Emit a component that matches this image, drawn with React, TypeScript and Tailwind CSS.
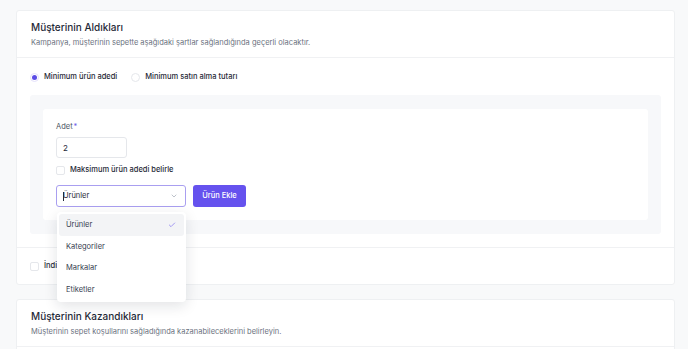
import { Check, ChevronDown } from "lucide-react";

const font = { fontFamily: "Inter, 'Noto Sans', sans-serif" };

const Radio = ({ checked, label }: { checked?: boolean; label: string }) => (
  <label className="flex items-center gap-[5px]">
    <span
      className={`flex h-[9px] w-[9px] items-center justify-center rounded-full border ${
        checked ? "border-[#e4e0fb] bg-white" : "border-[#e5e7eb] bg-white"
      }`}
    >
      {checked && <span className="h-[5px] w-[5px] rounded-full bg-[#5b4ce6]" />}
    </span>
    <span className="text-[7.5px] font-medium text-[#1f2937]">{label}</span>
  </label>
);

const Box = () => (
  <span className="h-[9px] w-[9px] rounded-[2px] border border-[#e5e7eb] bg-white" />
);

const SectionHeader = ({ title, desc }: { title: string; desc: string }) => (
  <div className="flex h-[47px] flex-col justify-center gap-[5px] border-b border-[#f0f1f3] px-[14px]">
    <div className="text-[10px] font-medium leading-[12px] text-[#1f2937]">{title}</div>
    <div className="text-[7.5px] leading-[10px] text-[#6b7280]">{desc}</div>
  </div>
);

const options = ["Ürünler", "Kategoriler", "Markalar", "Etiketler"];

export default function App() {
  return (
    <div style={font} className="h-[349px] w-[688px] overflow-hidden bg-[#f8f9fa] pt-[10px] pl-[16px] pr-[13px]">
      <div className="rounded-[3px] border border-[#eef0f2] bg-white">
        <SectionHeader
          title="Müşterinin Aldıkları"
          desc="Kampanya, müşterinin sepette aşağıdaki şartlar sağlandığında geçerli olacaktır."
        />
        <div className="border-b border-[#f0f1f3] px-[13px] pt-[13px] pb-[13px]">
          <div className="flex h-[12px] items-center gap-[14px]">
            <Radio checked label="Minimum ürün adedi" />
            <Radio label="Minimum satın alma tutarı" />
          </div>
          <div className="mt-[12px] rounded-[3px] bg-[#f7f8fa] pt-[14px] pr-[13px] pb-[14px] pl-[13px]">
            <div className="rounded-[3px] bg-white px-[13px] pt-[13px] pb-[13px]">
              <div className="text-[7.5px] leading-[10px] text-[#4b5563]">
                Adet<span className="ml-[1px] text-[#6d5ce8]">*</span>
              </div>
              <div className="mt-[5px] flex h-[21px] w-[71px] items-center rounded-[3px] border border-[#e5e7eb] px-[6px] text-[8px] text-[#1f2937]">
                2
              </div>
              <div className="mt-[7px] flex h-[10px] items-center gap-[5px]">
                <Box />
                <span className="text-[7.5px] font-medium text-[#1f2937]">Maksimum ürün adedi belirle</span>
              </div>
              <div className="mt-[10px] flex items-center gap-[7px]">
                <div className="relative">
                  <div className="flex h-[22px] w-[130px] items-center justify-between rounded-[3px] border border-[#a99ff0] pl-[6px] pr-[7px]">
                    <span className="flex items-center text-[7.5px] text-[#1f2937]">
                      <span className="mr-[-1px] h-[9px] w-px bg-[#1f2937]" />
                      Ürünler
                    </span>
                    <ChevronDown className="h-[8px] w-[8px] text-[#9ca3af]" strokeWidth={2} />
                  </div>
                  <div className="absolute top-[27px] left-[1px] z-10 w-[129px] rounded-[4px] bg-white p-[2px] shadow-[0_4px_14px_rgba(17,24,39,0.12)]">
                    {options.map((o, i) => (
                      <div
                        key={o}
                        className={`flex h-[21.5px] items-center justify-between rounded-[3px] pl-[7px] pr-[8px] text-[7.5px] text-[#374151] ${
                          i === 0 ? "bg-[#f3f4f6]" : ""
                        }`}
                      >
                        {o}
                        {i === 0 && <Check className="h-[8px] w-[8px] text-[#7c6cf0]" strokeWidth={2} />}
                      </div>
                    ))}
                  </div>
                </div>
                <button className="flex h-[22px] w-[53px] items-center justify-center rounded-[3px] bg-[#6552ee] text-[7.5px] font-medium text-white">
                  Ürün Ekle
                </button>
              </div>
            </div>
          </div>
        </div>
        <div className="flex h-[36px] items-center gap-[5px] px-[13px]">
          <Box />
          <span className="text-[7.5px] font-medium text-[#1f2937]">İndirimli ürünler</span>
        </div>
      </div>
      <div className="mt-[14px] rounded-[3px] border border-[#eef0f2] bg-white">
        <SectionHeader
          title="Müşterinin Kazandıkları"
          desc="Müşterinin sepet koşullarını sağladığında kazanabileceklerini belirleyin."
        />
        <div className="h-[20px]" />
      </div>
    </div>
  );
}
